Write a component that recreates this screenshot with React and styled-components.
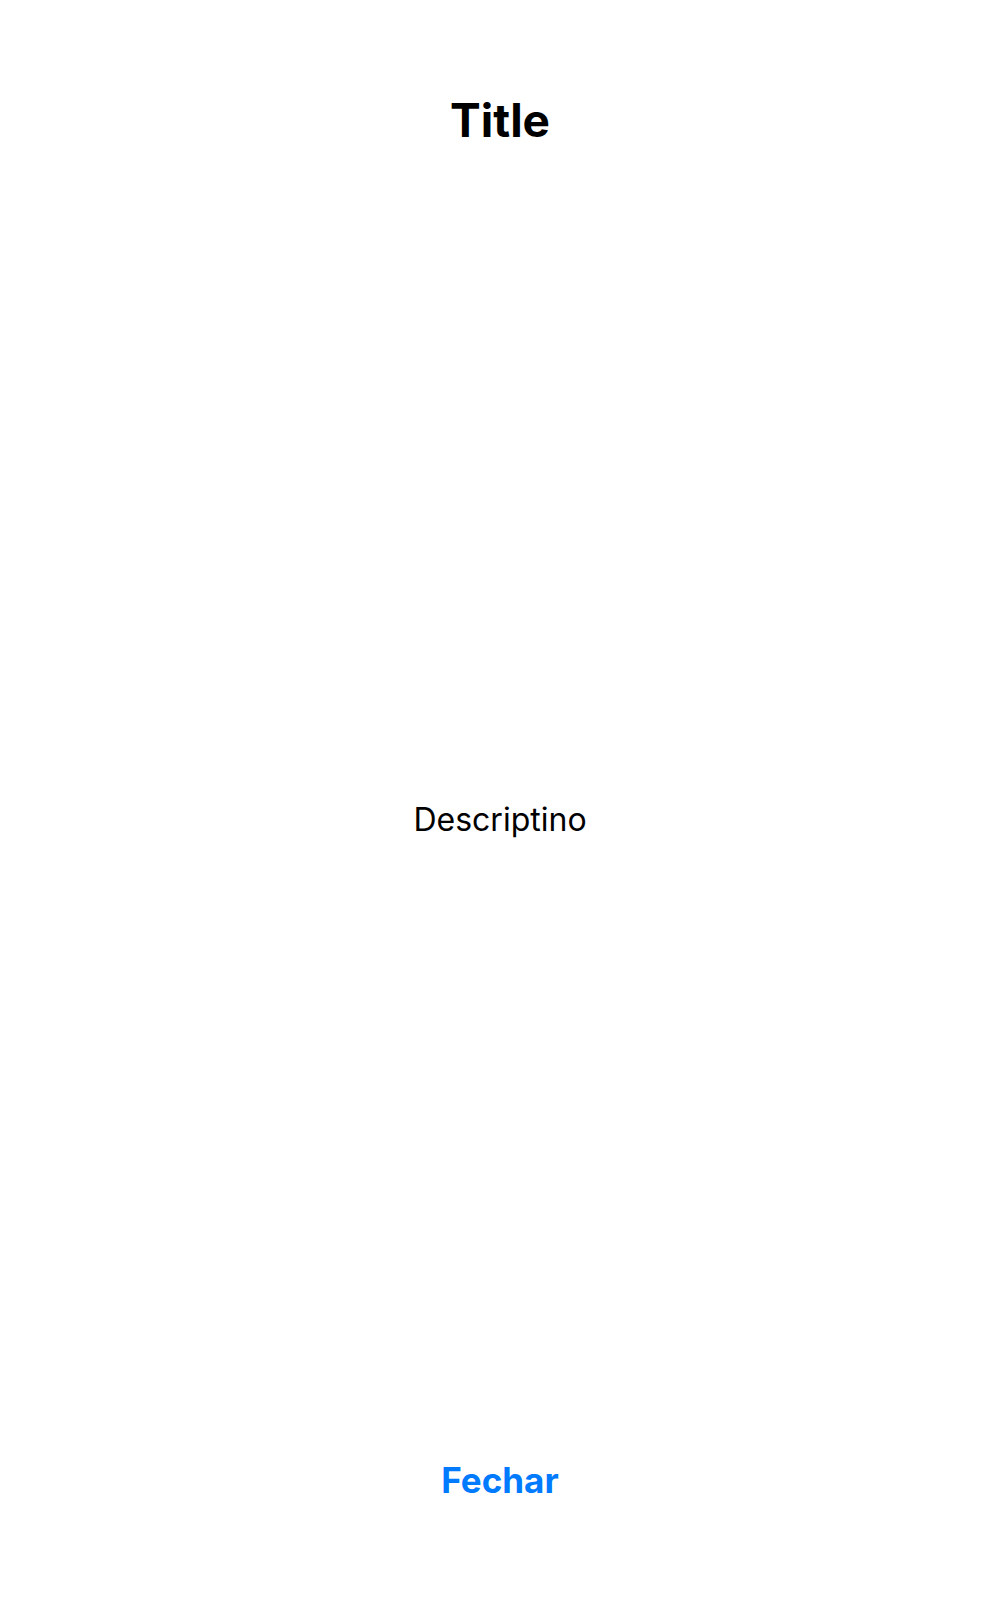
import React from "react";
import styled, { createGlobalStyle } from "styled-components";

const GlobalStyle = createGlobalStyle`
  html, body {
    margin: 0;
    padding: 0;
    background: #ffffff;
  }
  body {
    font-family: Inter, "Noto Sans", "Liberation Sans", sans-serif;
  }
`;

const Page = styled.div`
  min-height: 1600px;
  display: flex;
  flex-direction: column;
  align-items: center;
  background: #ffffff;
  box-sizing: border-box;
  padding: 92px 0 99px;
`;

const Title = styled.h1`
  margin: 0;
  font-size: 46px;
  font-weight: 700;
  color: #000000;
  letter-spacing: 0;
  text-align: center;
`;

const Body = styled.div`
  flex: 1;
  display: flex;
  align-items: center;
  justify-content: center;
  padding-top: 32px;
`;

const Description = styled.p`
  margin: 0;
  font-size: 32px;
  font-weight: 400;
  color: #000000;
  text-align: center;
`;

const CloseButton = styled.button`
  border: none;
  background: transparent;
  padding: 0;
  margin: 0;
  font-family: inherit;
  font-size: 35px;
  font-weight: 700;
  color: #007aff;
  cursor: pointer;
  line-height: normal;
`;

export default function App() {
  return (
    <>
      <GlobalStyle />
      <Page>
        <Title>Title</Title>
        <Body>
          <Description>Descriptino</Description>
        </Body>
        <CloseButton>Fechar</CloseButton>
      </Page>
    </>
  );
}
